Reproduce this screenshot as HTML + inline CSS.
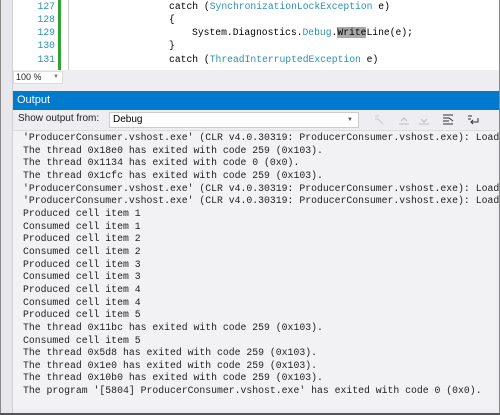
<!DOCTYPE html>
<html><head><style>
*{margin:0;padding:0;box-sizing:border-box}
body{width:500px;height:415px;overflow:hidden;background:#eeeef2;position:relative;font-family:"Liberation Sans",sans-serif}
.frame{position:absolute;left:0;top:0;width:500px;height:415px;border:1px solid #888;border-top:none}
.left{position:absolute;left:1px;top:0;width:12px;height:414px;background:#e8e8ec;border-right:1px solid #cfcfd4}
.editor{position:absolute;left:13px;top:0;width:486px;height:70px;background:#fff}
.ln{position:absolute;left:13px;width:42px;text-align:right;color:#2b91af;font:9.7px "Liberation Mono",monospace}
.green{position:absolute;left:58px;top:0;width:3px;height:70px;background:#2ea52e}
.sep{position:absolute;left:68px;top:0;width:1px;height:70px;background:#ccc}
.code{position:absolute;font:9.7px "Liberation Mono",monospace;color:#000;white-space:pre}
.t{color:#2b91af}
.zoombox{position:absolute;left:13px;top:71px;width:50px;height:13px;background:#fff;border:1px solid #ddd;font-size:9px;padding-left:2px;line-height:11px;color:#222}
.zoombox span{position:absolute;right:3px;top:0;font-size:6px;color:#777}
.hdr{position:absolute;left:13px;top:91px;width:487px;height:19px;background:#007acc;color:#fff;font-size:11px;line-height:19px;padding-left:4px}
.tb{position:absolute;left:13px;top:110px;width:487px;height:19px;background:#eeeef2;font-size:10px;color:#222}
.sel{position:absolute;left:109px;top:112px;width:250px;height:16px;background:#fff;border:1px solid #ccc;font-size:10px;line-height:14px;padding-left:3px}
.sel span{position:absolute;right:5px;top:0;font-size:6px;color:#555}
.out{position:absolute;left:13px;top:130px;width:484px;height:279px;background:#f2f2f4;border-top:1px solid #ddd}
.lines{position:absolute;left:23px;top:132px;font:9.8px/12.65px "Liberation Mono",monospace;color:#1e1e1e;white-space:pre}
.ico{position:absolute;top:114px;width:12px;height:12px}
</style></head><body>
<div class="left"></div>
<div class="editor"></div>
<div class="ln" style="top:1px">127</div>
<div class="ln" style="top:14px">128</div>
<div class="ln" style="top:27px">129</div>
<div class="ln" style="top:40px">130</div>
<div class="ln" style="top:54px">131</div>
<div class="green"></div><div class="sep"></div>
<div class="code" style="left:169px;top:1px">catch (<span class="t">SynchronizationLockException</span> e)</div>
<div class="code" style="left:169px;top:14px">{</div>
<div class="code" style="left:192px;top:27px">System.Diagnostics.<span class="t">Debug</span>.<span style="background:#a8a8a8">Write</span>Line(e);</div>
<div class="code" style="left:169px;top:40px">}</div>
<div class="code" style="left:169px;top:54px">catch (<span class="t">ThreadInterruptedException</span> e)</div>
<div class="zoombox">100 %<span>▼</span></div>
<div class="hdr">Output</div>
<div class="tb"><div style="position:absolute;left:5px;top:3px">Show output from:</div></div>
<div class="sel">Debug<span>▼</span></div>
<svg class="ico" style="left:373px" viewBox="0 0 12 12"><path d="M2 2h4M2 5h3l5 5" stroke="#ccc" fill="none"/></svg>
<svg class="ico" style="left:398px" viewBox="0 0 12 12"><path d="M1 10h10M3 7l3-3 3 3" stroke="#bbb" fill="none"/></svg>
<svg class="ico" style="left:418px" viewBox="0 0 12 12"><path d="M1 10h10M3 5l3 3 3-3" stroke="#bbb" fill="none"/></svg>
<svg class="ico" style="left:442px" viewBox="0 0 12 12"><path d="M1 1h10M1 4h6l4 3M1 7h6M1 10h10" stroke="#333" fill="none"/></svg>
<svg class="ico" style="left:467px" viewBox="0 0 12 12"><path d="M1 2h4M1 5h3M11 4v4H4M6 6l-2 2 2 2" stroke="#333" fill="none"/></svg>
<div class="out"></div>
<div class="lines">'ProducerConsumer.vshost.exe' (CLR v4.0.30319: ProducerConsumer.vshost.exe): Load
The thread 0x18e0 has exited with code 259 (0x103).
The thread 0x1134 has exited with code 0 (0x0).
The thread 0x1cfc has exited with code 259 (0x103).
'ProducerConsumer.vshost.exe' (CLR v4.0.30319: ProducerConsumer.vshost.exe): Load
'ProducerConsumer.vshost.exe' (CLR v4.0.30319: ProducerConsumer.vshost.exe): Load
Produced cell item 1
Consumed cell item 1
Produced cell item 2
Consumed cell item 2
Produced cell item 3
Consumed cell item 3
Produced cell item 4
Consumed cell item 4
Produced cell item 5
The thread 0x11bc has exited with code 259 (0x103).
Consumed cell item 5
The thread 0x5d8 has exited with code 259 (0x103).
The thread 0x1e0 has exited with code 259 (0x103).
The thread 0x10b0 has exited with code 259 (0x103).
The program '[5804] ProducerConsumer.vshost.exe' has exited with code 0 (0x0).</div>
<div class="frame"></div>
<div style="position:absolute;left:0;top:413px;width:500px;height:2px;background:#555"></div>
</body></html>
